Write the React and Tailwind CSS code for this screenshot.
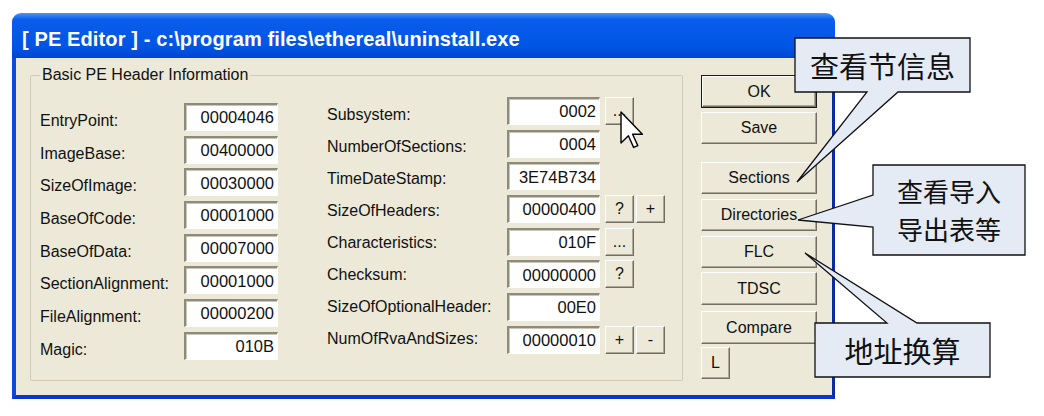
import React from "react";

const leftRows = [
  ["EntryPoint:", "00004046"],
  ["ImageBase:", "00400000"],
  ["SizeOfImage:", "00030000"],
  ["BaseOfCode:", "00001000"],
  ["BaseOfData:", "00007000"],
  ["SectionAlignment:", "00001000"],
  ["FileAlignment:", "00000200"],
  ["Magic:", "010B"],
];

const midRows = [
  ["Subsystem:", "0002", ["..."]],
  ["NumberOfSections:", "0004", []],
  ["TimeDateStamp:", "3E74B734", []],
  ["SizeOfHeaders:", "00000400", ["?", "+"]],
  ["Characteristics:", "010F", ["..."]],
  ["Checksum:", "00000000", ["?"]],
  ["SizeOfOptionalHeader:", "00E0", []],
  ["NumOfRvaAndSizes:", "00000010", ["+", "-"]],
];

const ui = "font-['Liberation_Sans',Arial,sans-serif] text-[16px] text-[#111]";
const cjk = "font-['Noto_Sans_CJK_SC',sans-serif] text-[#111]";

const Field = ({ value }) => (
  <div className="h-[28px] bg-white border-t-2 border-l-2 border-t-[#8E8B7E] border-l-[#8E8B7E] border-b border-r border-b-white border-r-white shadow-[inset_1px_1px_0_#C9C6B6] flex items-center justify-end pr-[3px] leading-none text-[16.5px]">
    {value}
  </div>
);

const SmallBtn = ({ children }) => (
  <div className="w-[29px] h-[28px] bg-[#ECE9D8] border border-t-white border-l-white border-b-[#716F64] border-r-[#716F64] shadow-[inset_-1px_-1px_0_#ACA899] flex items-center justify-center leading-none">
    {children}
  </div>
);

const Btn = ({ children, def, className = "" }) => (
  <div className={`h-[32px] ${def ? "border border-[#1A1A1A]" : ""} ${className}`}>
    <div className="h-full bg-[#ECE9D8] border border-t-white border-l-white border-b-[#716F64] border-r-[#716F64] shadow-[inset_-1px_-1px_0_#ACA899] flex items-center justify-center leading-none">
      {children}
    </div>
  </div>
);

const Callout = ({ points }) => (
  <polygon points={points} fill="#E5EBF5" stroke="#111" strokeWidth="1.3" />
);

export default function App() {
  return (
    <div className={`w-[1044px] h-[416px] bg-white relative overflow-hidden ${ui}`}>
      <div className="pt-[13px] pl-[12px]">
        <div className="w-[823px] h-[386px] flex flex-col rounded-t-[9px] overflow-hidden">
          {/* title bar */}
          <div className="h-[45px] bg-[linear-gradient(180deg,#4A93F8_0%,#0B5DEC_14%,#0055E5_75%,#0045CF_100%)] flex items-center pl-[10px] pt-[6px]">
            <span className="font-bold text-[20px] text-white leading-none tracking-[0.12px]">
              [ PE Editor ] - c:\program files\ethereal\uninstall.exe
            </span>
          </div>

          {/* client */}
          <div className="flex-1 flex bg-[#ECE9D8] border-l-4 border-l-[#0A4BDA] border-r-[3px] border-r-[#0A2AA8] border-b-4 border-b-[#0838C6]">
            <fieldset className="ml-[14px] mt-[8px] mb-[14px] w-[653px] border border-[#CFCBB8] rounded-[2px]">
              <legend className="ml-[9px] px-[2px] leading-[18px]">Basic PE Header Information</legend>
              <div className="flex">
                {/* left column */}
                <div className="pl-[9px] pt-[19px] flex flex-col">
                  {leftRows.map(([label, value]) => (
                    <div key={label} className="h-[32.7px] flex items-start">
                      <div className="w-[144px] mt-[8px] leading-[20px]">{label}</div>
                      <div className="w-[94px]">
                        <Field value={value} />
                      </div>
                    </div>
                  ))}
                </div>

                {/* middle column */}
                <div className="ml-[49px] flex">
                  <div className="w-[180px] pt-[21px] flex flex-col">
                    {midRows.map(([label]) => (
                      <div key={label} className="h-[32px] leading-[20px]">
                        {label}
                      </div>
                    ))}
                  </div>
                  <div className="pt-[13px] flex flex-col">
                    {midRows.map(([label, value, btns]) => (
                      <div key={label} className="h-[32.7px] flex items-start">
                        <div className="w-[93px]">
                          <Field value={value} />
                        </div>
                        <div className="ml-[5px] flex gap-[2px]">
                          {btns.map((b, i) => (
                            <SmallBtn key={i}>{b}</SmallBtn>
                          ))}
                        </div>
                      </div>
                    ))}
                  </div>
                </div>
              </div>
            </fieldset>

            {/* button column */}
            <div className="ml-[18px] mt-[17px] w-[116px] flex flex-col">
              <Btn def className="h-[33px]">OK</Btn>
              <Btn className="mt-[4px]">Save</Btn>
              <Btn className="mt-[18px]">Sections</Btn>
              <Btn className="mt-[5px]">Directories</Btn>
              <Btn className="mt-[5px]">FLC</Btn>
              <Btn className="mt-[4px] h-[33px]">TDSC</Btn>
              <Btn className="mt-[6px] h-[33px]">Compare</Btn>
              <div className="mt-[3px] w-[29px]">
                <Btn className="h-[30px]">L</Btn>
              </div>
            </div>
          </div>
        </div>
      </div>

      {/* mouse cursor */}
      <svg className="absolute left-[620px] top-[111px]" width="24" height="38" viewBox="0 0 12 19">
        <path d="M0.5 0.5 L0.5 16 L4.2 12.4 L6.8 18.2 L8.9 17.3 L6.3 11.6 L11.2 11.6 Z" fill="#fff" stroke="#000" strokeWidth="0.7" strokeLinejoin="round" />
      </svg>

      {/* callouts */}
      <svg className="absolute left-0 top-0" width="1044" height="416">
        <Callout points="795,38 970,38 970,92 898,92 797,182 867,92 795,92" />
        <Callout points="873,165 1025,165 1025,255 873,255 873,227 798,220 873,195" />
        <Callout points="815,323 887,323 805,253 917,323 990,323 990,377 815,377" />
      </svg>
      <div className={`absolute left-[795px] top-[38px] w-[175px] h-[54px] flex items-center justify-center text-[29px] leading-none ${cjk}`}>
        查看节信息
      </div>
      <div className={`absolute left-[873px] top-[165px] w-[152px] h-[90px] flex items-center justify-center text-center text-[26px] leading-[38px] ${cjk}`}>
        <p>
          查看导入
          <br />
          导出表等
        </p>
      </div>
      <div className={`absolute left-[815px] top-[323px] w-[175px] h-[54px] flex items-center justify-center text-[29px] leading-none ${cjk}`}>
        地址换算
      </div>
    </div>
  );
}
